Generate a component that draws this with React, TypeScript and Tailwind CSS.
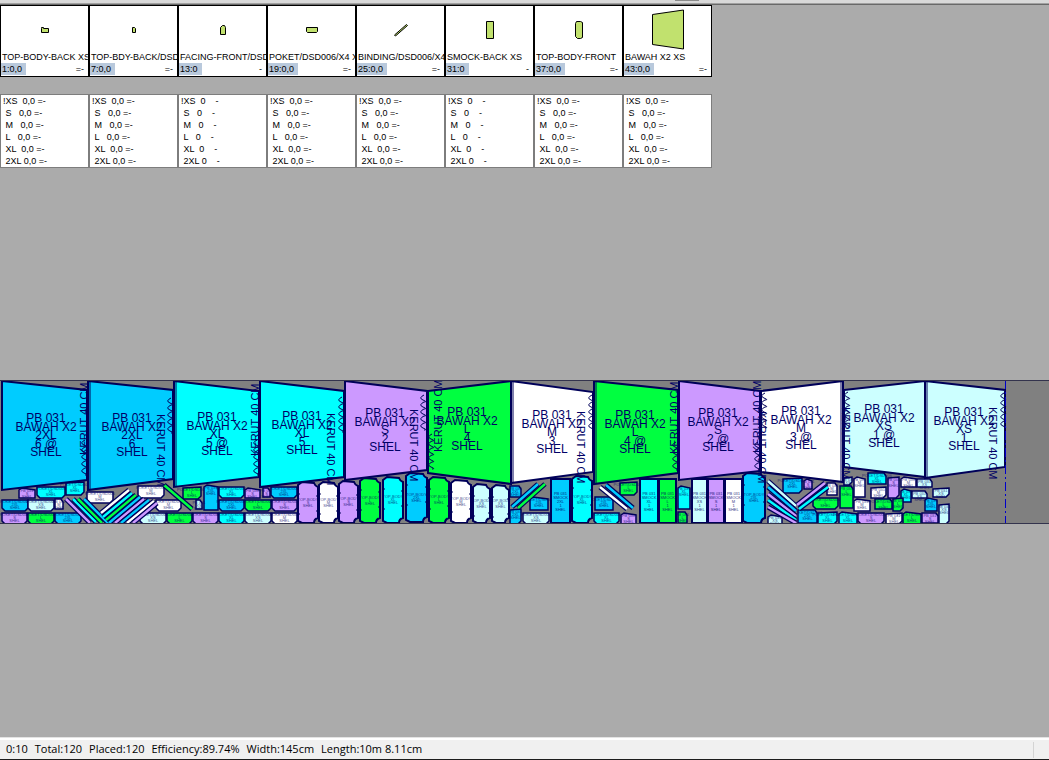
type Size = "XS" | "S" | "M" | "L" | "XL" | "2XL";

const sizeColor: Record<Size, string> = {
  XS: "#ccffff",
  S: "#cc99ff",
  M: "#ffffff",
  L: "#00ff40",
  XL: "#00ffff",
  "2XL": "#00ccff",
};

const parts = [
  { name: "TOP-BODY-BACK XS", no: "1:0,0", paired: true, shape: "M41.5 27.5v-1h2v1h5v4h-7z" },
  { name: "TOP-BDY-BACK/DSD006", no: "7:0,0", paired: true, shape: "M43.5 26.5h2l1 1v4h-3z" },
  { name: "FACING-FRONT/DSD006", no: "13:0", paired: false, shape: "M42.5 33.5v-7l2-2h2l1 2v7z" },
  { name: "POKET/DSD006/X4 XS", no: "19:0,0", paired: true, shape: "M39.5 26.5h11v4l-1 1h-9l-1-1z" },
  { name: "BINDING/DSD006/X4", no: "25:0,0", paired: true, shape: "M38.5 34l12-10.5l1 1l-12 10.5z" },
  { name: "SMOCK-BACK XS", no: "31:0", paired: false, shape: "M41.5 20.5h7v17h-7z" },
  { name: "TOP-BODY-FRONT", no: "37:0,0", paired: true, shape: "M41.5 22.5l1-2h4l2 1v15l-2 1h-3l-2-2z" },
  { name: "BAWAH X2 XS", no: "43:0,0", paired: true, shape: "M29.5 13.5l31-4.5v39l-31-4.5z" },
];

const pairedRows = [
  "!XS  0,0 =-",
  " S   0,0 =-",
  " M   0,0 =-",
  " L   0,0 =-",
  " XL  0,0 =-",
  " 2XL 0,0 =-",
];
const singleRows = [
  "!XS  0    -",
  " S   0    -",
  " M   0    -",
  " L   0    -",
  " XL  0    -",
  " 2XL 0    -",
];

// box: x1, x2, top left, top right, bottom right, bottom left
const bodies: { size: Size; box: number[]; at: number[]; no: string }[] = [
  { size: "2XL", box: [2, 87, 1, 10, 100, 110], at: [46, 42], no: "6 @" },
  { size: "2XL", box: [88, 173, 1, 10, 99, 110], at: [132, 42], no: "6" },
  { size: "XL", box: [174, 259, 1, 11, 97, 107], at: [217, 41], no: "5 @" },
  { size: "XL", box: [260, 344, 1, 11, 97, 107], at: [302, 40], no: "5" },
  { size: "S", box: [345, 427, 1, 11, 90, 100], at: [385, 37], no: "2" },
  { size: "L", box: [428, 511, 11, 1, 104, 93], at: [467, 36], no: "4" },
  { size: "M", box: [511, 593, 1, 12, 92, 103], at: [552, 39], no: "3" },
  { size: "L", box: [594, 678, 1, 10, 93, 104], at: [635, 39], no: "4 @" },
  { size: "S", box: [679, 760, 1, 11, 91, 100], at: [718, 37], no: "2 @" },
  { size: "M", box: [761, 843, 11, 1, 102, 92], at: [801, 35], no: "3 @" },
  { size: "XS", box: [844, 925, 10, 1, 97, 87], at: [884, 33], no: "1 @" },
  { size: "XS", box: [925, 1005, 1, 10, 87, 98], at: [964, 36], no: "1" },
];

// inner hem line next to the straight side of a body
const hems = [
  [90, 1, 110],
  [176, 1, 107],
  [513, 1, 102],
  [596, 1, 103],
  [841, 1, 102],
  [927, 1, 97],
];

// x, y, direction (1 reads down, -1 reads up)
const gathers = [
  [88, 75, -1],
  [157, 34, 1],
  [259, 76, -1],
  [327, 33, 1],
  [410, 29, 1],
  [442, 72, -1],
  [577, 31, 1],
  [678, 74, -1],
  [761, 73, -1],
  [758, 31, 1],
  [842, 27, 1],
  [989, 27, 1],
];

// x, y, number of waves
const scallops = [
  [85, 60, 5],
  [171, 18, 5],
  [257, 60, 5],
  [342, 17, 5],
  [424, 15, 5],
  [432, 54, 5],
  [592, 15, 5],
  [676, 62, 4],
  [758, 62, 4],
  [765, 13, 5],
  [848, 12, 5],
  [1004, 13, 5],
];

type Piece = [Size, number, number, number, number];

const small: Piece[] = [
  ["S", 19, 108, 16, 10],
  ["XL", 37, 106, 28, 12],
  ["XL", 66, 102, 18, 13],
  ["M", 87, 111, 26, 12],
  ["M", 138, 105, 26, 13],
  ["2XL", 2, 119, 26, 12],
  ["XS", 28, 119, 26, 12],
  ["M", 55, 119, 8, 11],
  ["S", 2, 132, 25, 12],
  ["L", 28, 132, 26, 12],
  ["2XL", 55, 132, 26, 12],
  ["XS", 140, 132, 26, 12],
  ["M", 156, 119, 25, 12],
  ["L", 167, 132, 25, 12],
  ["L", 183, 107, 18, 12],
  ["2XL", 204, 105, 14, 25],
  ["XS", 196, 120, 6, 10],
  ["XL", 219, 106, 25, 12],
  ["S", 245, 108, 15, 10],
  ["S", 263, 108, 7, 10],
  ["2XL", 271, 106, 26, 12],
  ["2XL", 219, 119, 25, 12],
  ["L", 245, 119, 26, 12],
  ["S", 272, 119, 25, 12],
  ["S", 193, 132, 25, 12],
  ["XL", 219, 132, 25, 12],
  ["XS", 245, 132, 26, 12],
  ["M", 272, 132, 25, 12],
  ["2XL", 510, 106, 11, 12],
  ["2XL", 510, 129, 11, 15],
  ["2XL", 530, 117, 18, 13],
  ["XS", 523, 132, 26, 12],
  ["XL", 594, 132, 25, 12],
  ["S", 621, 133, 15, 11],
  ["2XL", 595, 117, 18, 14],
  ["L", 620, 102, 17, 13],
  ["XL", 678, 106, 12, 23],
  ["L", 678, 132, 9, 12],
  ["2XL", 783, 98, 19, 15],
  ["S", 804, 99, 8, 10],
  ["M", 827, 103, 10, 13],
  ["L", 813, 117, 25, 12],
  ["XS", 768, 135, 14, 9],
  ["2XL", 798, 130, 19, 14],
  ["XL", 818, 132, 19, 12],
  ["XL", 839, 132, 18, 12],
  ["L", 840, 106, 13, 23],
  ["XS", 844, 97, 8, 8],
  ["M", 854, 97, 11, 20],
  ["XL", 868, 93, 18, 12],
  ["S", 888, 97, 11, 21],
  ["M", 901, 97, 15, 10],
  ["XS", 917, 99, 15, 9],
  ["M", 871, 107, 15, 11],
  ["XL", 901, 109, 10, 13],
  ["XS", 912, 111, 15, 8],
  ["XS", 933, 108, 16, 9],
  ["M", 854, 119, 16, 12],
  ["L", 875, 119, 17, 11],
  ["L", 893, 118, 10, 13],
  ["2XL", 925, 118, 12, 13],
  ["S", 858, 132, 26, 12],
  ["M", 886, 133, 16, 11],
  ["L", 903, 132, 18, 12],
  ["S", 922, 133, 16, 11],
  ["XS", 939, 124, 10, 20],
];

const fronts: Piece[] = [
  ["S", 298, 102, 20, 41],
  ["M", 319, 102, 19, 41],
  ["S", 339, 101, 19, 42],
  ["L", 360, 98, 20, 45],
  ["XL", 383, 97, 20, 46],
  ["2XL", 406, 93, 21, 49],
  ["L", 429, 97, 20, 46],
  ["M", 451, 100, 20, 43],
  ["XS", 473, 104, 17, 39],
  ["XS", 492, 105, 17, 38],
  ["XL", 572, 96, 20, 47],
  ["2XL", 743, 93, 22, 50],
];

const smocks: Piece[] = [
  ["2XL", 551, 99, 19, 44],
  ["XL", 640, 99, 18, 44],
  ["L", 659, 99, 17, 44],
  ["XS", 692, 99, 15, 44],
  ["S", 708, 99, 16, 44],
  ["M", 725, 99, 17, 44],
];

// binding strips: size, x1, y1, x2, y2
const strips: Piece[] = [
  ["S", 66, 119, 90, 143],
  ["XL", 73, 119, 96, 142],
  ["L", 78, 119, 102, 143],
  ["2XL", 84, 119, 108, 143],
  ["M", 101, 133, 129, 110],
  ["XL", 103, 137, 132, 113],
  ["L", 106, 140, 136, 115],
  ["2XL", 109, 143, 140, 117],
  ["S", 115, 143, 144, 119],
  ["2XL", 121, 143, 149, 120],
  ["M", 127, 143, 154, 121],
  ["S", 133, 143, 157, 123],
  ["L", 164, 105, 192, 129],
  ["2XL", 512, 127, 538, 104],
  ["L", 518, 128, 545, 104],
  ["M", 600, 107, 627, 129],
  ["2XL", 606, 105, 633, 128],
  ["XS", 768, 101, 796, 126],
  ["2XL", 768, 107, 796, 131],
  ["S", 768, 114, 796, 136],
  ["XL", 768, 120, 796, 140],
  ["S", 768, 127, 796, 143],
  ["S", 797, 125, 825, 103],
  ["XL", 799, 129, 828, 107],
];

function outline(i: number, [, x, y, w, h]: Piece) {
  const r = x + w;
  const b = y + h;
  if (w > 23) return `M${x} ${y + 1}H${r}V${b - 3}L${r - 3} ${b}H${x + 3}L${x} ${b - 3}Z`;
  if (i % 3 === 0) return `M${x} ${y + 2}L${x + 3} ${y}L${r} ${y + 2}V${b}H${x}Z`;
  if (i % 3 === 1) return `M${x} ${y}H${r - 2}L${r} ${y + 3}V${b - 1}H${x}Z`;
  return `M${x} ${y + 1}L${r} ${y}V${b - 3}L${r - 3} ${b}H${x}Z`;
}

function Label({ x, y, step, lines }: { x: number; y: number; step: number; lines: string[] }) {
  return (
    <text textAnchor="middle" fill="#000066" stroke="none">
      {lines.map((line, i) => (
        <tspan key={i} x={x} y={y + Math.round(i * step)}>
          {line}
        </tspan>
      ))}
    </text>
  );
}

function Marker() {
  return (
    <svg
      viewBox="0 1 1049 142"
      preserveAspectRatio="xMinYMin meet"
      className="block h-[142px] w-full"
      fontFamily="'Liberation Sans', Arial, sans-serif"
      role="img"
      aria-label="Marker"
    >
      <g stroke="#000059" strokeWidth="1.5">
        {small.map((piece, i) => {
          const [size, x, y, w] = piece;
          return (
            <g key={i} fontSize="4">
              <path d={outline(i, piece)} fill={sizeColor[size]} />
              <g opacity="0.7">
                <Label
                  x={x + w / 2}
                  y={y + 4}
                  step={3}
                  lines={w > 16 ? ["POKET/DSD006", size, "SHEL"] : ["PB 031", size, "SHEL"]}
                />
              </g>
            </g>
          );
        })}
        {strips.map(([size, x1, y1, x2, y2], i) => (
          <g key={i}>
            <path d={`M${x1} ${y1}L${x2} ${y2}`} strokeWidth="5" />
            <path d={`M${x1} ${y1}L${x2} ${y2}`} stroke={sizeColor[size]} strokeWidth="2.5" />
          </g>
        ))}
        {fronts.map(([size, x, y, w, h], i) => (
          <g key={i} fontSize="4">
            <path
              d={`M${x} ${y + 3}L${x + 4} ${y}L${x + w - 4} ${y + 1}Q${x + w - 3} ${y + 4} ${x + w} ${y + 5}V${y + h - 5}Q${x + w - 4} ${y + h - 4} ${x + w - 4} ${y + h}H${x + 4}L${x} ${y + h - 2}Z`}
              fill={sizeColor[size]}
              strokeWidth="2"
            />
            <path d={`M${x} ${y + 12}h2M${x} ${y + 32}h2M${x + w} ${y + 14}h-2M${x + w} ${y + 29}h-2`} strokeWidth="1" />
            <g opacity="0.7">
              <Label x={x + w / 2} y={y + h / 2 - 2} step={3} lines={["TOP-BODY", size, "SHEL"]} />
            </g>
          </g>
        ))}
        {smocks.map(([size, x, y, w, h], i) => (
          <g key={i} fontSize="4">
            <rect x={x} y={y} width={w} height={h} fill={sizeColor[size]} strokeWidth="2" />
            <g opacity="0.8">
              <Label x={x + w / 2} y={y + 16} step={4} lines={["PB 031", "SMOCK", size, "1", "SHEL"]} />
            </g>
          </g>
        ))}
        {bodies.map(({ size, box: [x1, x2, tl, tr, br, bl] }, i) => (
          <path
            key={i}
            d={`M${x1} ${tl}L${x2} ${tr}V${br}L${x1} ${bl}Z`}
            fill={sizeColor[size]}
            strokeWidth="2"
          />
        ))}
        {hems.map(([x, y1, y2]) => (
          <path key={x} d={`M${x} ${y1}V${y2}`} strokeWidth="1" />
        ))}
        {scallops.map(([x, y, n], i) => (
          <path key={i} d={`M${x} ${y}${"q-6 3 -1 5t1 2".repeat(n)}`} fill="none" strokeWidth="1" />
        ))}
      </g>
      <g fontSize="12">
        {bodies.map(({ size, at, no }, i) => (
          <Label key={i} x={at[0]} y={at[1]} step={8.5} lines={["PB 031", "BAWAH X2", size, no, "SHEL"]} />
        ))}
      </g>
      <g fontSize="11" fill="#000066">
        {gathers.map(([x, y, dir], i) => (
          <text key={i} transform={`translate(${x} ${y}) rotate(${dir * 90})`}>
            KERUT 40 CM
          </text>
        ))}
      </g>
      <path d="M1005.5 0V144" stroke="#0000cc" strokeDasharray="9 3 2 3" />
    </svg>
  );
}

function PartCard({ part }: { part: (typeof parts)[number] }) {
  return (
    <div className="flex h-[72px] w-[89px] flex-col overflow-hidden border border-black bg-white">
      <svg viewBox="0 4 87 45" className="h-[45px] w-full shrink-0" aria-hidden="true">
        <path d={part.shape} fill="#c1e16e" stroke="#000" transform="translate(-1 -1)" />
      </svg>
      <div className="h-3 pl-px whitespace-nowrap">{part.name}</div>
      <div className="flex h-3 justify-between pr-1">
        <span className="bg-[#b9c9dc] pr-1 pl-px">{part.no}</span>
        <span>{part.paired ? "=-" : "-"}</span>
      </div>
    </div>
  );
}

function SizeCard({ paired }: { paired: boolean }) {
  return (
    <ul className="h-[74px] w-[89px] border border-[#7d7d7d] bg-white pl-0.5">
      {(paired ? pairedRows : singleRows).map((row) => (
        <li key={row} className="whitespace-pre">
          {row}
        </li>
      ))}
    </ul>
  );
}

export default function App() {
  return (
    <div className="flex min-h-screen flex-col bg-[#ababab] text-black">
      <header className="h-[5px] border-b border-[#696969] bg-[#d9d9d9]">
        <div className="flex h-1 border-b border-[#a0a0a0]">
          <div className="ml-[675px] h-px w-6 bg-[#8a8a8a]" />
        </div>
      </header>

      <section className="font-['Liberation_Sans',Arial,sans-serif] text-[9px] leading-3">
        <div className="flex">
          {parts.map((part) => (
            <PartCard key={part.no} part={part} />
          ))}
        </div>
        <div className="mt-[17px] flex">
          {parts.map((part) => (
            <SizeCard key={part.no} paired={part.paired} />
          ))}
        </div>
      </section>

      <main className="mt-[212px] mb-auto border-y border-[#33334d] bg-[#808080]">
        <Marker />
      </main>

      <footer className="border-t border-[#e3e3e3]">
        <div className="flex h-[22px] items-center border-t-2 border-b border-t-white border-b-[#1c1c1c] bg-[#f0f0f0] pl-1.5 font-['Open_Sans','Noto_Sans',sans-serif] text-[11px]">
          <div className="flex grow gap-[7px] whitespace-nowrap">
            <span>0:10</span>
            <span>Total:120</span>
            <span>Placed:120</span>
            <span>Efficiency:89.74%</span>
            <span>Width:145cm</span>
            <span>Length:10m 8.11cm</span>
          </div>
          <div className="h-4 w-4 border-l border-[#d4d4d4]" />
        </div>
      </footer>
    </div>
  );
}
